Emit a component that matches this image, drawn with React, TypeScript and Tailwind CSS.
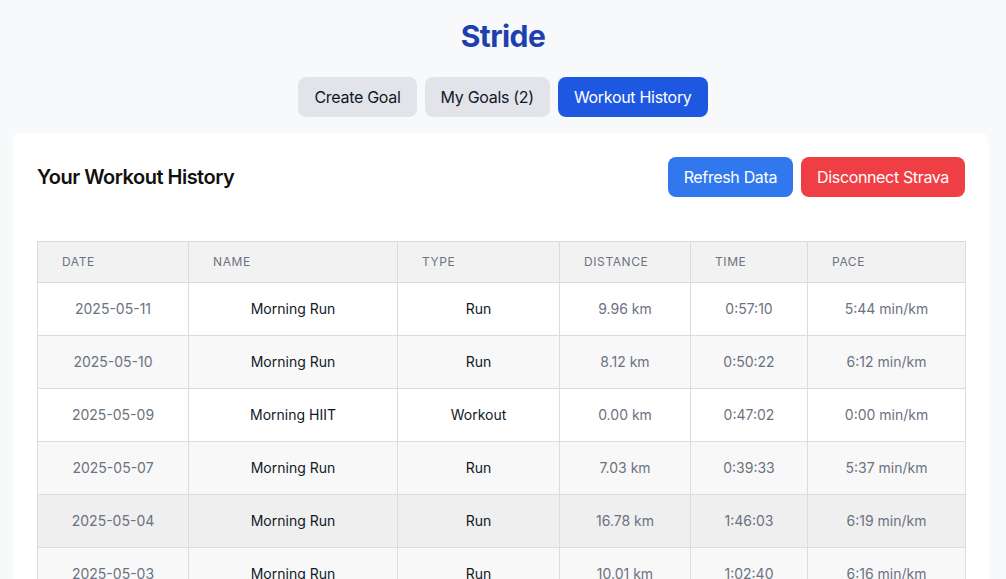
import React from "react";

const rows = [
  ["2025-05-11", "Morning Run", "Run", "9.96 km", "0:57:10", "5:44 min/km"],
  ["2025-05-10", "Morning Run", "Run", "8.12 km", "0:50:22", "6:12 min/km"],
  ["2025-05-09", "Morning HIIT", "Workout", "0.00 km", "0:47:02", "0:00 min/km"],
  ["2025-05-07", "Morning Run", "Run", "7.03 km", "0:39:33", "5:37 min/km"],
  ["2025-05-04", "Morning Run", "Run", "16.78 km", "1:46:03", "6:19 min/km"],
  ["2025-05-03", "Morning Run", "Run", "10.01 km", "1:02:40", "6:16 min/km"],
  ["2025-05-01", "Evening Run", "Run", "5.42 km", "0:31:05", "5:44 min/km"],
  ["2025-04-29", "Morning Run", "Run", "8.50 km", "0:51:12", "6:01 min/km"],
];

const rowBg = [
  "bg-white",
  "bg-[#f8f8f8]",
  "bg-white",
  "bg-[#f8f8f8]",
  "bg-[#efefef]",
  "bg-[#f8f8f8]",
  "bg-white",
  "bg-[#f8f8f8]",
];

export default function App() {
  return (
    <div
      className="min-h-screen bg-[#f8f9fb] px-[13px] pt-[18px]"
      style={{ fontFamily: "Inter, 'Noto Sans', sans-serif" }}
    >
      <h1 className="text-center text-[30px] leading-[36px] font-bold tracking-[-0.6px] text-[#1e40af] mb-[23px]">
        Stride
      </h1>
      <div className="flex justify-center gap-2 mb-4">
        <button className="h-10 px-4 rounded-lg bg-[#e2e4e9] text-[#111827] text-base tracking-[-0.3px]">
          Create Goal
        </button>
        <button className="h-10 px-4 rounded-lg bg-[#e2e4e9] text-[#111827] text-base tracking-[-0.3px]">
          My Goals (2)
        </button>
        <button className="h-10 px-4 rounded-lg bg-[#1f58e0] text-white text-base tracking-[-0.3px]">
          Workout History
        </button>
      </div>
      <div className="w-[976px] bg-white rounded-lg shadow-[0_1px_2px_rgba(0,0,0,0.04)] p-6">
        <div className="flex items-center justify-between mb-[44px]">
          <h2 className="text-xl font-semibold tracking-[-0.5px] text-[#111]">Your Workout History</h2>
          <div className="flex gap-2">
            <button className="h-10 px-4 rounded-lg bg-[#3178ee] text-white text-base tracking-[-0.35px]">
              Refresh Data
            </button>
            <button className="h-10 px-4 rounded-lg bg-[#ef3e44] text-white text-base tracking-[-0.35px]">
              Disconnect Strava
            </button>
          </div>
        </div>
        <table className="w-[928px] table-fixed border-collapse">
          <colgroup>
            <col className="w-[151px]" />
            <col className="w-[209px]" />
            <col className="w-[162px]" />
            <col className="w-[131px]" />
            <col className="w-[117px]" />
            <col className="w-[158px]" />
          </colgroup>
          <thead>
            <tr className="bg-[#f2f2f2]">
              {["Date", "Name", "Type", "Distance", "Time", "Pace"].map((h) => (
                <th
                  key={h}
                  className="border border-[#dcdcdc] px-6 py-3 text-left text-xs font-normal uppercase tracking-wider text-[#6b7280] leading-4"
                >
                  {h}
                </th>
              ))}
            </tr>
          </thead>
          <tbody>
            {rows.map((r, i) => (
              <tr key={i} className={rowBg[i]}>
                <td className="border border-[#dcdcdc] py-4 text-center text-sm leading-5 text-[#6b7280]">{r[0]}</td>
                <td className="border border-[#dcdcdc] py-4 text-center text-sm leading-5 font-normal text-[#111827]">{r[1]}</td>
                <td className="border border-[#dcdcdc] py-4 text-center text-sm leading-5 font-normal text-[#111827]">{r[2]}</td>
                <td className="border border-[#dcdcdc] py-4 text-center text-sm leading-5 text-[#6b7280]">{r[3]}</td>
                <td className="border border-[#dcdcdc] py-4 text-center text-sm leading-5 text-[#6b7280]">{r[4]}</td>
                <td className="border border-[#dcdcdc] py-4 text-center text-sm leading-5 text-[#6b7280]">{r[5]}</td>
              </tr>
            ))}
          </tbody>
        </table>
      </div>
    </div>
  );
}
